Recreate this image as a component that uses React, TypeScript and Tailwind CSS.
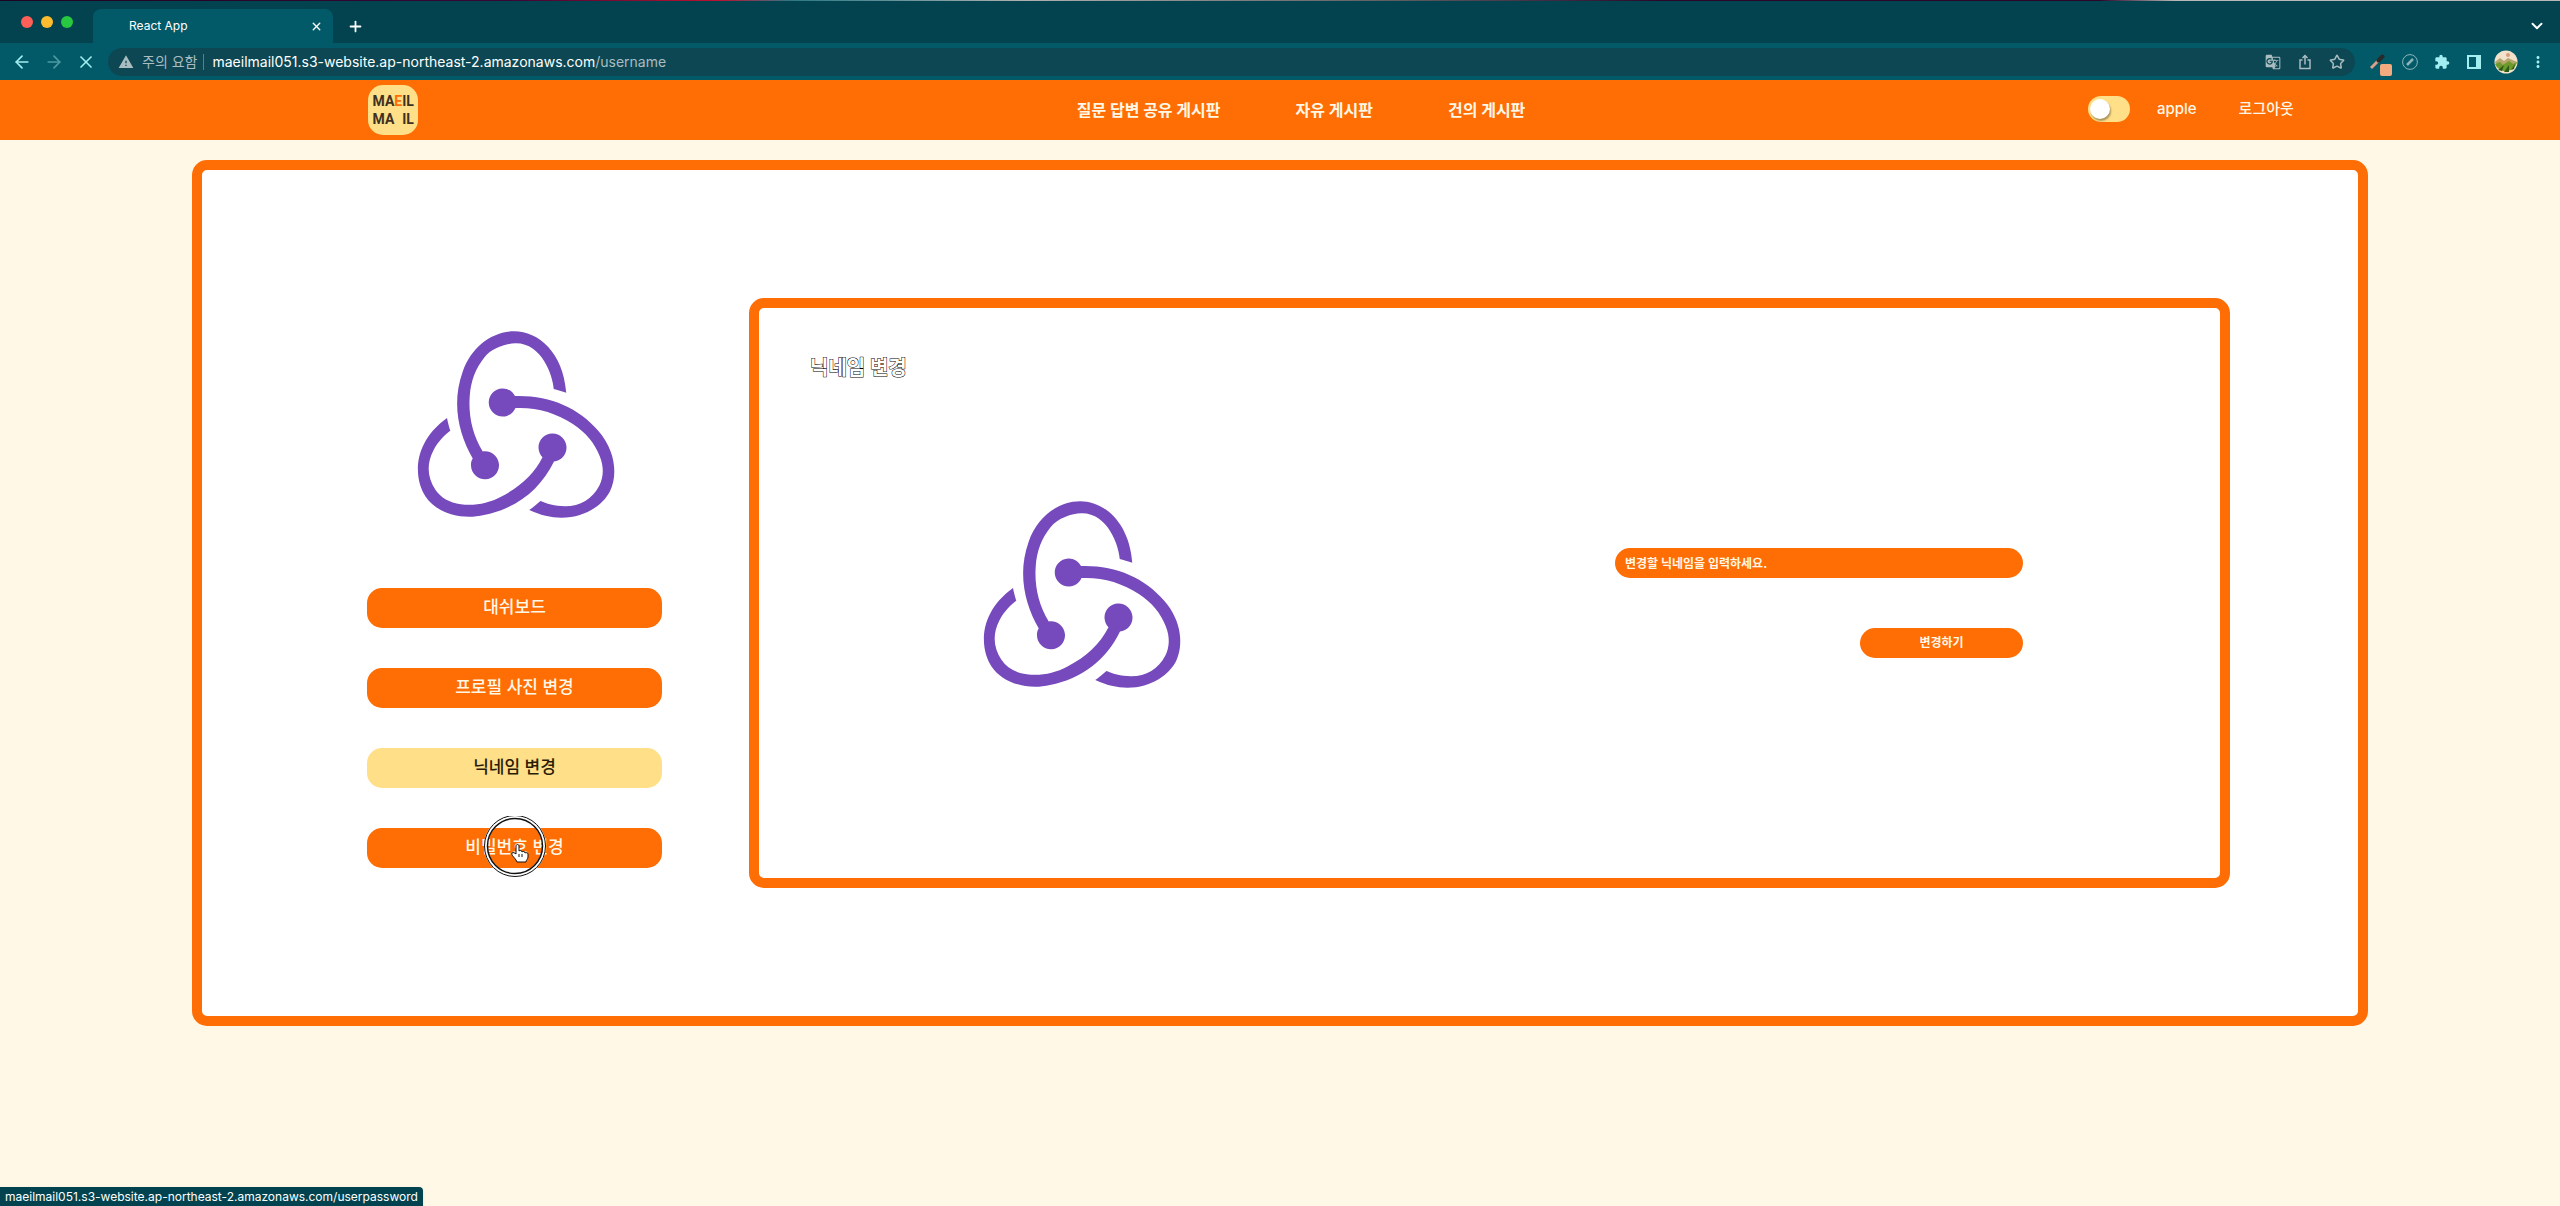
import { ArrowLeft, ArrowRight, ChevronDown, Plus, Star, X } from "lucide-react";
import { MdExtension, MdGTranslate, MdMoreVert, MdWarning } from "react-icons/md";

const menu = [
  { label: "대쉬보드", active: false },
  { label: "프로필 사진 변경", active: false },
  { label: "닉네임 변경", active: true },
  { label: "비밀번호 변경", active: false },
];

function ReduxLogo() {
  return (
    <svg viewBox="0 0 100 100" className="size-[250px] shrink-0" fill="#764abc" role="img" aria-label="프로필 사진">
      <path d="M65.6 65.4c2.9-.3 5.1-2.8 5-5.8-.1-3-2.6-5.4-5.6-5.4h-.2c-3.1.1-5.5 2.7-5.4 5.8.1 1.5.7 2.8 1.6 3.7-3.4 6.7-8.6 11.6-16.4 15.7-5.3 2.8-10.8 3.8-16.3 3.1-4.5-.6-8-2.6-10.2-5.9-3.2-4.9-3.5-10.2-.8-15.5 1.9-3.8 4.9-6.6 6.8-8-.4-1.3-1-3.5-1.3-5.1-14.5 10.5-13 24.7-8.6 31.4 3.3 5 10 8.1 17.4 8.1 2 0 4-.2 6-.7 12.8-2.5 22.5-10.1 28-21.4z" />
      <path d="M83.2 53c-7.6-8.9-18.8-13.8-31.6-13.8H50c-.9-1.8-2.8-3-4.9-3h-.2c-3.1.1-5.5 2.7-5.4 5.8.1 3 2.6 5.4 5.6 5.4h.2c2.2-.1 4.1-1.5 4.9-3.4H52c7.6 0 14.8 2.2 21.3 6.5 5 3.3 8.6 7.6 10.6 12.8 1.7 4.2 1.6 8.3-.2 11.8-2.8 5.3-7.5 8.2-13.7 8.2-4 0-7.8-1.2-9.8-2.1-1.1 1-3.1 2.6-4.5 3.6 4.3 2 8.7 3.1 12.9 3.1 9.6 0 16.7-5.3 19.4-10.6 2.9-5.8 2.7-15.8-4.8-24.3z" />
      <path d="M32.4 67.1c.1 3 2.6 5.4 5.6 5.4h.2c3.1-.1 5.5-2.7 5.4-5.8-.1-3-2.6-5.4-5.6-5.4h-.2c-.2 0-.5 0-.7.1-4.1-6.8-5.8-14.2-5.2-22.2.4-6 2.4-11.2 5.9-15.5 2.9-3.7 8.5-5.5 12.3-5.6 10.6-.2 15.1 13 15.4 18.3 1.3.3 3.5 1 5 1.5-1.2-16.2-11.2-24.6-20.8-24.6-9 0-17.3 6.5-20.6 16.1-4.6 12.8-1.6 25.1 4 34.8-.5.7-.8 1.8-.7 2.9z" />
    </svg>
  );
}

function BrowserChrome() {
  return (
    <div className="bg-[#02434f] text-white">
      <div className="h-px bg-[linear-gradient(90deg,#1c0420_0%,#3a0634_20%,#c01030_28%,#2c7a86_31%,#b0b0b0_40%,#5a5a60_55%,#2a0628_65%,#2a0628_82%,#b8b8b8_85%)]" />
      <div className="flex h-[42px] items-end pr-3.5">
        <div className="flex h-full w-[93px] items-center gap-2 pl-[21px]">
          <span className="size-3 rounded-full bg-[#fe5f57]" />
          <span className="size-3 rounded-full bg-[#febc2e]" />
          <span className="size-3 rounded-full bg-[#28c840]" />
        </div>
        <div className="flex h-[34px] w-60 items-center justify-between rounded-t-lg bg-[#025a69] pr-2.5 pl-9">
          <span className="text-xs">React App</span>
          <button aria-label="탭 닫기"><X size={13} strokeWidth={2.5} /></button>
        </div>
        <button aria-label="새 탭" className="flex h-[34px] w-11 items-center justify-center"><Plus size={17} strokeWidth={2.5} /></button>
        <button aria-label="탭 검색" className="ml-auto flex h-[34px] items-center"><ChevronDown size={18} strokeWidth={2.5} /></button>
      </div>
      <div className="flex h-[37px] items-center bg-[#025a69] pr-3.5">
        <div className="flex w-[108px] items-center gap-3 pl-3 text-[#a2eef0]">
          <button aria-label="뒤로"><ArrowLeft size={20} strokeWidth={2} /></button>
          <button aria-label="앞으로" className="text-[#4d9aa2]"><ArrowRight size={20} strokeWidth={2} /></button>
          <button aria-label="중지"><X size={20} strokeWidth={2} /></button>
        </div>
        <div className="flex h-7 grow items-center rounded-full bg-[#0c4753] pr-2.5 pl-2.5 text-[#a9bcc0]">
          <MdWarning size={16} />
          <span className="ml-2 text-sm">주의 요함</span>
          <span className="mr-2 ml-1.5 h-4 w-px bg-[#5b8087]" />
          <span className="text-sm"><span className="text-white">maeilmail051.s3-website.ap-northeast-2.amazonaws.com</span>/username</span>
          <div className="ml-auto flex items-center gap-4">
            <button aria-label="번역"><MdGTranslate size={16} /></button>
            <button aria-label="공유">
              <svg viewBox="0 0 16 16" className="size-4" fill="none" stroke="currentColor" strokeWidth="1.500"><path d="M5.500 6H3v8.500h10V6h-2.500M8 10.500V2M5.500 4 8 1.500 10.500 4" /></svg>
            </button>
            <button aria-label="북마크"><Star size={16} strokeWidth={2.25} /></button>
          </div>
        </div>
        <div className="flex items-center gap-4 pl-[15px] text-[#a2eef0]">
          <button aria-label="스포이트" className="relative size-4">
            <svg viewBox="0 0 16 16" className="size-4"><path d="M1 14 9 6" stroke="#d9a08a" strokeWidth="3" /><path d="M8.500 6.500 12.500 2.500" stroke="#2a2a2a" strokeWidth="4" strokeLinecap="round" /></svg>
            <span className="absolute top-2.5 left-2.5 size-3 rounded-xs bg-[#f2aa7e]" />
          </button>
          <button aria-label="확장 도구"><svg viewBox="0 0 16 16" className="size-4" fill="none" stroke="#8db4ba"><circle cx="8" cy="8" r="7.400" /><path d="m5 11 6-6" strokeWidth="2.500" /></svg></button>
          <button aria-label="확장 프로그램"><MdExtension size={16} /></button>
          <button aria-label="측면 패널"><svg viewBox="0 0 16 16" className="size-4"><path fill="currentColor" d="M1 1h14v14H1zM3 3v10h7V3z" fillRule="evenodd" /></svg></button>
          <button aria-label="프로필">
            <svg viewBox="0 0 24 24" className="-mx-1 size-6">
              <circle cx="12" cy="12" r="11.500" fill="#f2e2cc" />
              <path d="M1 12l5-4 4 3 4-3 9 4a11.500 11.500 0 0 1-22 0z" fill="#b5a66c" />
              <path d="M1 14l5-2 3 3 6-4 4 3 4-2a11.500 11.500 0 0 1-22 2z" fill="#6d9a2c" />
              <path d="M4 20l6-5-2 6zM10 22l5-7 0 7zM17 20l4-6-1 5z" fill="#2f5a16" />
              <circle cx="14" cy="5" r="2" fill="#dc9a7c" />
            </svg>
          </button>
          <button aria-label="메뉴"><MdMoreVert size={18} className="-mx-px" /></button>
        </div>
      </div>
    </div>
  );
}

function SiteHeader() {
  return (
    <header className="flex h-[60px] items-center bg-[#ff6d05] px-[10.4%] text-base leading-6 text-[#fff8e6]">
      <div className="flex flex-1 pl-[102px]">
        <a href="#home" className="grid size-[50px] place-content-center rounded-[15px] bg-[#ffdf88] font-[Roboto,sans-serif] text-[14px] leading-[18px] font-bold text-[#3d3122]">
          <span>MA<span className="text-[#ff6d05]">E</span>IL</span>
          <span className="flex justify-between"><span>MA</span><span>IL</span></span>
        </a>
      </div>
      <nav className="mr-[60px] flex gap-[75px] font-bold">
        <a href="#qna">질문 답변 공유 게시판</a>
        <a href="#free">자유 게시판</a>
        <a href="#suggest">건의 게시판</a>
      </nav>
      <div className="flex flex-1 items-center justify-end pb-0.5">
        <label className="flex h-[26px] w-[42px] cursor-pointer items-center rounded-full bg-[#ffdf88] px-0.5">
          <input type="checkbox" aria-label="테마 전환" className="size-5 appearance-none rounded-full bg-white shadow-[1px_2px_2px_rgba(0,0,0,0.35)]" />
        </label>
        <a href="#me" className="ml-[27px] text-[15px] font-medium">apple</a>
        <button className="ml-[42px] text-[15px] font-medium">로그아웃</button>
      </div>
    </header>
  );
}

function Pointer() {
  return (
    <svg viewBox="0 0 64 64" className="pointer-events-none absolute top-1/2 left-1/2 size-16 -translate-x-1/2 -translate-y-1/2" fill="none">
      <circle cx="32" cy="30" r="29" stroke="#fff" strokeWidth="4" />
      <circle cx="32" cy="30" r="30.500" stroke="#111" strokeWidth="1" />
      <circle cx="32" cy="30" r="27.500" stroke="#111" strokeWidth="1.500" />
      <path d="M33 44c-2-3-5-5-4-7 1-1 3 0 4 1v-8c0-2 3-2 3 0v5c1-1 3-1 3 1 1-1 3-1 3 1 1-1 3 0 3 1v3c0 2-2 3-2 5h-9z" fill="#fff" stroke="#111" />
      <path d="M36 38v3M39 38v3" stroke="#111" />
    </svg>
  );
}

export default function App() {
  return (
    <div className="relative flex min-h-screen flex-col bg-[#fff8e6] font-[Inter,'Noto_Sans_CJK_KR',sans-serif]">
      <BrowserChrome />
      <SiteHeader />
      <main className="mx-auto mt-5 flex w-[85%] items-start rounded-[15px] border-10 border-[#ff6d05] bg-white py-32 pr-32 pl-[118px]">
        <aside className="ml-[47px] flex w-[295px] shrink-0 flex-col items-center">
          <ReduxLogo />
          <nav className="mt-10 flex w-full flex-col gap-10">
            {menu.map((m) => (
              <button
                key={m.label}
                className={
                  m.active
                    ? "relative h-10 rounded-[15px] bg-[#ffdf88] text-[17px] font-medium text-[#2a1c08]"
                    : "relative h-10 rounded-[15px] bg-[#ff6d05] text-[17px] font-medium text-[#fff8e6]"
                }
              >
                {m.label}
                {m.label === "비밀번호 변경" && <Pointer />}
              </button>
            ))}
          </nav>
        </aside>
        <section className="ml-[87px] h-[590px] grow rounded-[15px] border-10 border-[#ff6d05] px-[51px] pt-[46px]">
          <h1 className="text-[20px] leading-7 font-bold text-white [-webkit-text-stroke:1px_#000] [paint-order:stroke_fill]">닉네임 변경</h1>
          <div className="mt-[86px] flex justify-between px-[146px]">
            <ReduxLogo />
            <form className="mt-20 flex w-[408px] flex-col items-end gap-[50px] text-[12px] font-bold">
              <input aria-label="닉네임" placeholder="변경할 닉네임을 입력하세요." className="h-[30px] w-full rounded-full bg-[#ff6d05] px-2.5 text-[#fff8e6] placeholder:text-[#fff8e6]" />
              <button type="button" className="h-[30px] w-[163px] rounded-full bg-[#ff6d05] text-[#fff8e6]">변경하기</button>
            </form>
          </div>
        </section>
      </main>
      <div className="absolute bottom-0 left-0 h-[19px] rounded-tr-sm bg-[#02434f] px-[5px] text-xs leading-[19px] text-white shadow">maeilmail051.s3-website.ap-northeast-2.amazonaws.com/userpassword</div>
    </div>
  );
}
